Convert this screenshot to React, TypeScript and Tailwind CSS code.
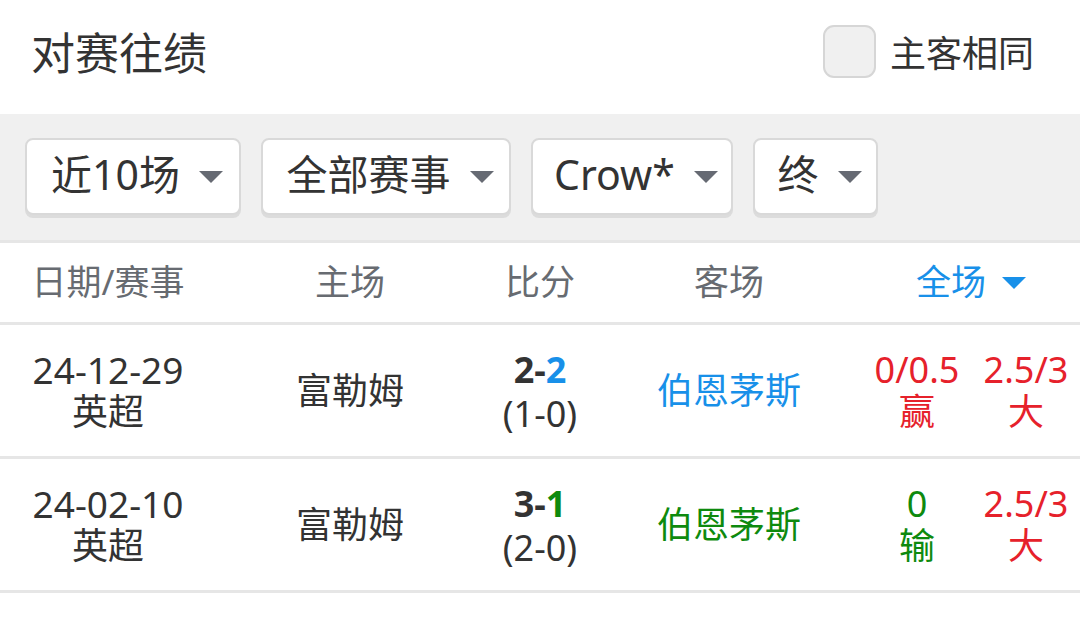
const rows = [
  {
    date: '24-12-29',
    league: '英超',
    home: '富勒姆',
    homeGoals: '2',
    awayGoals: '2',
    awayColor: 'text-[#1890e9]',
    half: '(1-0)',
    away: '伯恩茅斯',
    handicap: '0/0.5',
    handicapResult: '赢',
    handicapColor: 'text-[#e6212b]',
    ou: '2.5/3',
    ouResult: '大',
  },
  {
    date: '24-02-10',
    league: '英超',
    home: '富勒姆',
    homeGoals: '3',
    awayGoals: '1',
    awayColor: 'text-[#0e8a0e]',
    half: '(2-0)',
    away: '伯恩茅斯',
    handicap: '0',
    handicapResult: '输',
    handicapColor: 'text-[#0e8a0e]',
    ou: '2.5/3',
    ouResult: '大',
  },
]

const filters = [
  { label: '近10场', w: 'w-[216px]' },
  { label: '全部赛事', w: 'w-[250px]' },
  { label: 'Crow*', w: 'w-[202px]' },
  { label: '终', w: 'w-[125px]' },
]

const cols = 'grid grid-cols-[216px_268px_112px_266px_110px_108px]'

function Caret({ color }: { color: string }) {
  return (
    <svg width="24" height="12" viewBox="0 0 24 12" className={color}>
      <path d="M0 0 L24 0 L12 12 Z" fill="currentColor" />
    </svg>
  )
}

export default function App() {
  return (
    <div className="w-[1080px] h-[618px] bg-white overflow-hidden font-['Noto_Sans','Noto_Sans_CJK_SC',sans-serif] text-[#333]">
      {/* title bar */}
      <div className="flex h-[114px] items-center justify-between pl-[31px] pr-[46px] pb-[12px]">
        <h1 className="text-[44px] leading-none pt-[4px]">对赛往绩</h1>
        <label className="flex items-center gap-[14px]">
          <span className="block h-[53px] w-[53px] rounded-[11px] border-2 border-[#d6d6d6] bg-[#f0f0f0]" />
          <span className="text-[36px] leading-none pt-[6px]">主客相同</span>
        </label>
      </div>

      {/* filters */}
      <div className="flex h-[126px] items-start gap-[20px] bg-[#f0f0f0] pl-[25px] pt-[24px]">
        {filters.map((f) => (
          <button
            key={f.label}
            className={`${f.w} flex h-[77px] items-center justify-center gap-[19px] rounded-[8px] border-2 border-[#d9d9d9] bg-white pl-[8px] shadow-[0_3px_0_#dcdcdc]`}
          >
            <span className="text-[41px] leading-none pb-[4px]">{f.label}</span>
            <Caret color="text-[#666a73]" />
          </button>
        ))}
      </div>

      {/* table header */}
      <div className={`${cols} h-[85px] items-center border-y-[3px] border-[#e6e6e6] text-[35px] text-[#676b71]`}>
        <div className="text-center">日期/赛事</div>
        <div className="text-center">主场</div>
        <div className="text-center">比分</div>
        <div className="text-center">客场</div>
        <div className="col-span-2 flex items-center justify-center gap-[16px] text-[#1890e9]">
          <span>全场</span>
          <Caret color="text-[#1890e9]" />
        </div>
      </div>

      {rows.map((r) => (
        <div
          key={r.date}
          className={`${cols} h-[134px] items-center border-b-[3px] border-[#e6e6e6] text-[36px] leading-[42px]`}
        >
          <div className="flex flex-col items-center">
            <span className="text-[37px]">{r.date}</span>
            <span>{r.league}</span>
          </div>
          <div className="text-center">{r.home}</div>
          <div className="flex flex-col items-center pt-[6px]">
            <span className="font-bold leading-[40px]">
              {r.homeGoals}-<span className={r.awayColor}>{r.awayGoals}</span>
            </span>
            <span className="leading-[48px]">{r.half}</span>
          </div>
          <div className={`text-center ${r.awayColor}`}>{r.away}</div>
          <div className={`flex flex-col items-center ${r.handicapColor}`}>
            <span>{r.handicap}</span>
            <span>{r.handicapResult}</span>
          </div>
          <div className="flex flex-col items-center text-[#e6212b]">
            <span>{r.ou}</span>
            <span>{r.ouResult}</span>
          </div>
        </div>
      ))}
    </div>
  )
}
